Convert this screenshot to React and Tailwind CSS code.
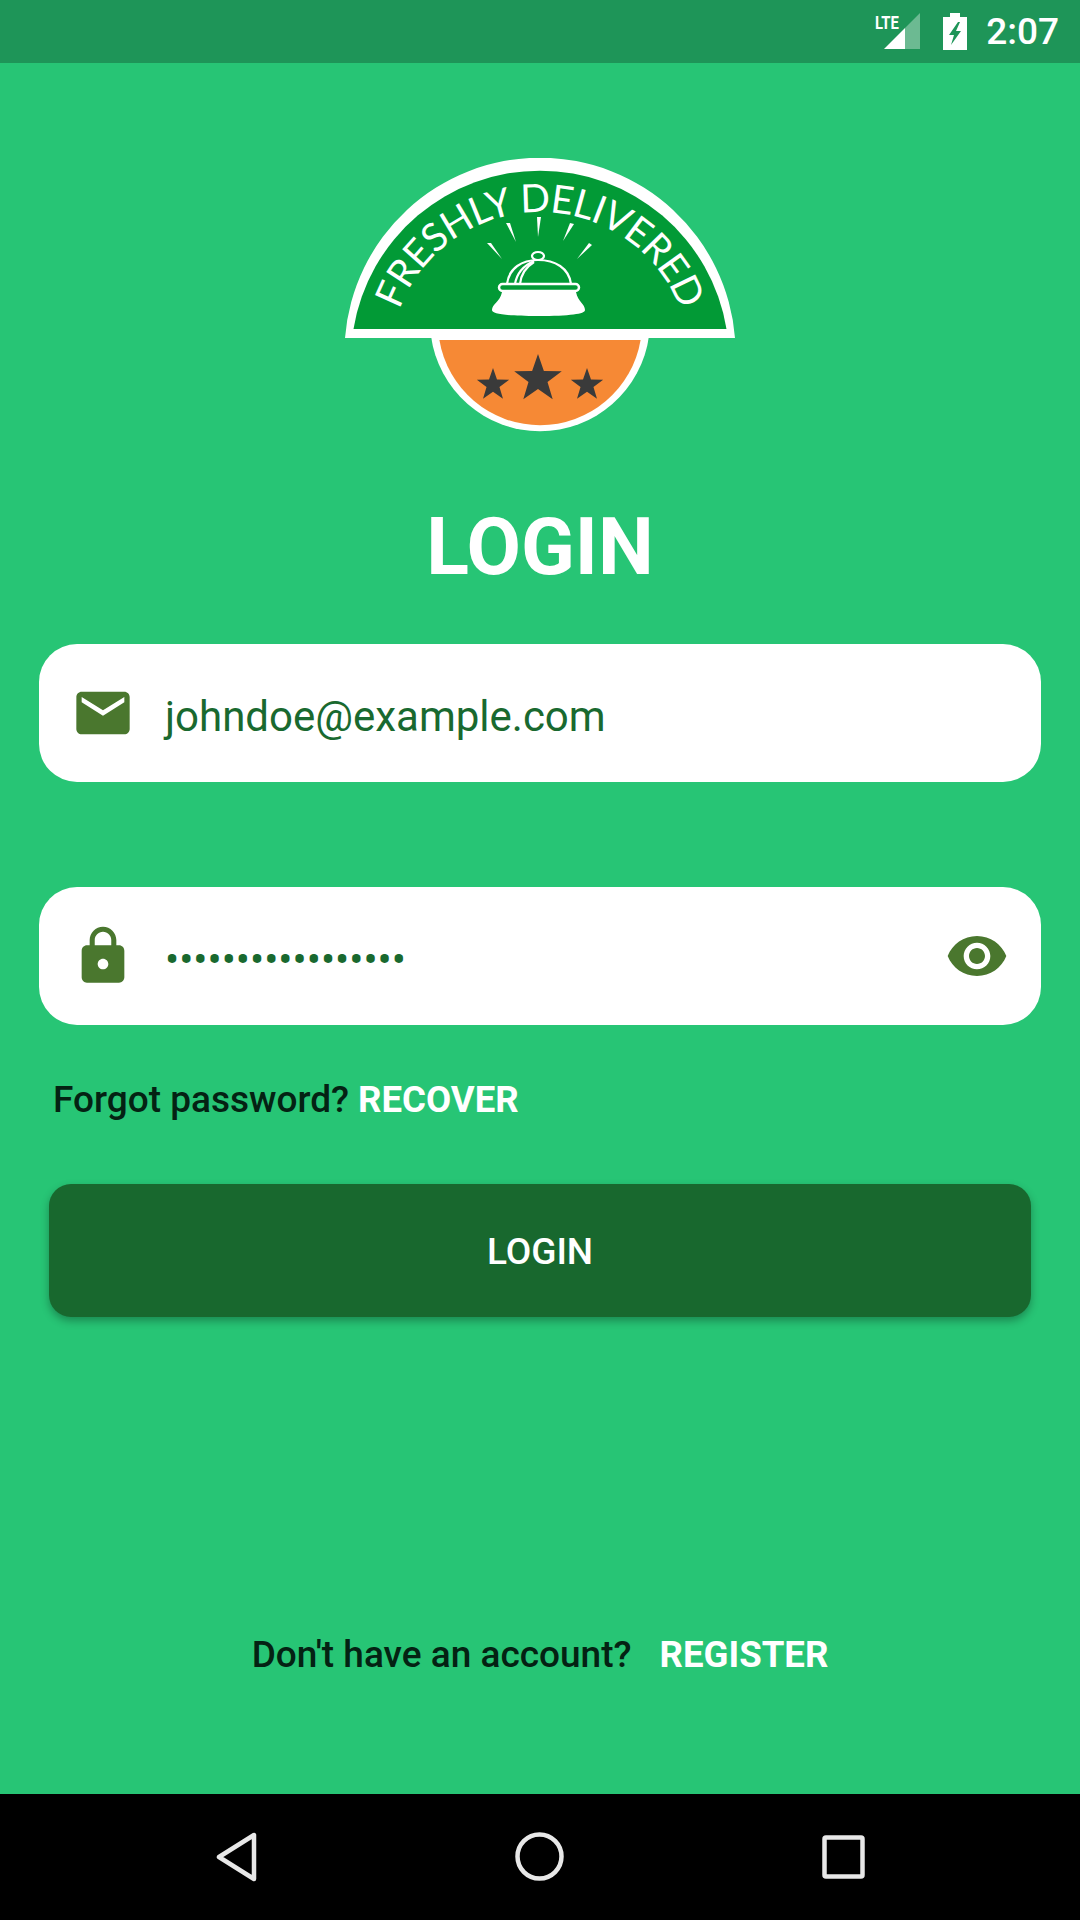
const ROBOTO = "font-['Roboto',sans-serif]";

const starPoints = (cx, cy, r) => {
  const pts = [];
  for (let i = 0; i < 10; i++) {
    const rad = i % 2 === 0 ? r : r * 0.4;
    const a = (Math.PI / 5) * i - Math.PI / 2;
    pts.push(`${cx + rad * Math.cos(a)},${cy + rad * Math.sin(a)}`);
  }
  return pts.join(' ');
};

function Logo() {
  return (
    <svg viewBox="345 158 390 275" className="w-[390px] h-[275px] block">
      <defs>
        <path id="logoArc" d="M 390 362 A 150 150 0 0 1 690 362" />
      </defs>
      {/* orange bottom */}
      <path d="M431 336 A 110 110 0 0 0 649 336 Z" fill="#ffffff" />
      <path d="M439.4 340 A 102 102 0 0 0 640.6 340 Z" fill="#f68935" />
      <polygon points={starPoints(538, 379, 25)} fill="#3a3a3a" />
      <polygon points={starPoints(493, 385, 17)} fill="#3a3a3a" />
      <polygon points={starPoints(587, 385, 17)} fill="#3a3a3a" />
      {/* green top */}
      <path d="M345 338 A 195.6 195.6 0 0 1 735 338 Z" fill="#ffffff" />
      <path d="M353.5 329 A 189 189 0 0 1 726.5 329 Z" fill="#029a36" />
      <text fill="#ffffff" fontSize="39" fontFamily="Lato, sans-serif" fontWeight="400" letterSpacing="-0.8">
        <textPath href="#logoArc" startOffset="50%" textAnchor="middle">FRESHLY DELIVERED</textPath>
      </text>
      {/* rays */}
      <g fill="#ffffff">
        <polygon points="502,259 487,243 491,243" />
        <polygon points="516,242 506,223 510,223" />
        <polygon points="538,237 537,217 541,217" />
        <polygon points="563,241 570,223 574,224" />
        <polygon points="577,259 589,243 592,245" />
      </g>
      {/* bell */}
      <g fill="none" stroke="#ffffff" strokeWidth="2.2">
        <ellipse cx="538" cy="256" rx="6" ry="4" />
        <path d="M507 284 C509 268 522 260 538 260 C555 260 569 268 571 284" />
        <path d="M515 284 C517 272 525 265 534 261" />
        <path d="M520 284 C521 274 526 267 534 262" />
        <rect x="499" y="284" width="80" height="7" rx="3.5" strokeWidth="2.5" />
      </g>
      <path d="M502 292 H576 C578 302 585 304 585 310 C585 314 570 316 538 316 C506 316 492 314 492 310 C492 304 500 302 502 292 Z" fill="#ffffff" />
    </svg>
  );
}

function StatusBar() {
  return (
    <div className="h-[63px] bg-[#1e9558] flex items-center justify-end shrink-0">
      <div className="relative w-[46px] h-[38px] mt-[-1px]">
        <span className={`absolute left-0 top-[1px] text-[19px] leading-[19px] font-bold text-white origin-left scale-x-[0.78] ${ROBOTO}`}>LTE</span>
        <svg viewBox="0 0 46 38" className="w-[46px] h-[38px]">
          <polygon points="9,37 30,16 30,37" fill="#ffffff" />
          <polygon points="30,16 45,1 45,37 30,37" fill="#ffffff" fillOpacity="0.35" />
        </svg>
      </div>
      <svg viewBox="0 0 24 37" className="w-[24px] h-[37px] ml-[22px]">
        <path d="M7 0H17V4H24V37H0V4H7Z" fill="#ffffff" />
        <path d="M15 9 L6 22 H11 L8 32 L18 18 H13 L17 9 Z" fill="#1e9558" />
      </svg>
      <span className={`ml-[19px] mr-[21px] text-[37px] leading-none font-medium text-white ${ROBOTO}`}>2:07</span>
    </div>
  );
}

function NavBar() {
  return (
    <div className="h-[126px] bg-black flex items-center justify-center gap-[258px] shrink-0">
      <svg viewBox="0 0 41 50" className="w-[41px] h-[50px] mt-[-1px]">
        <path d="M38 3 V47 L3 25 Z" fill="none" stroke="#e8e8e8" strokeWidth="4.5" strokeLinejoin="round" />
      </svg>
      <svg viewBox="0 0 49 49" className="w-[49px] h-[49px] mt-[-1px]">
        <circle cx="24.5" cy="24.5" r="22" fill="none" stroke="#e8e8e8" strokeWidth="4.5" />
      </svg>
      <svg viewBox="0 0 43 44" className="w-[43px] h-[44px] mt-[-1px]">
        <rect x="2.5" y="2.5" width="38" height="39" rx="1.5" fill="none" stroke="#e8e8e8" strokeWidth="4.5" />
      </svg>
    </div>
  );
}

function MaterialIcon({ d }) {
  return (
    <svg viewBox="0 0 24 24" className="w-[64px] h-[64px] shrink-0" fill="#4a772e">
      <path d={d} />
    </svg>
  );
}

const MAIL = 'M20 4H4c-1.1 0-1.99.9-1.99 2L2 18c0 1.1.9 2 2 2h16c1.1 0 2-.9 2-2V6c0-1.1-.9-2-2-2zm0 4l-8 5-8-5V6l8 5 8-5v2z';
const LOCK = 'M18 8h-1V6c0-2.76-2.24-5-5-5S7 3.24 7 6v2H6c-1.1 0-2 .9-2 2v10c0 1.1.9 2 2 2h12c1.1 0 2-.9 2-2V10c0-1.1-.9-2-2-2zm-6 9c-1.1 0-2-.9-2-2s.9-2 2-2 2 .9 2 2-.9 2-2 2zm3.1-9H8.9V6c0-1.71 1.39-3.1 3.1-3.1 1.71 0 3.1 1.39 3.1 3.1v2z';
const EYE = 'M12 4.5C7 4.5 2.73 7.61 1 12c1.73 4.39 6 7.5 11 7.5s9.27-3.11 11-7.5c-1.73-4.39-6-7.5-11-7.5zM12 17c-2.76 0-5-2.24-5-5s2.24-5 5-5 5 2.24 5 5-2.24 5-5 5zm0-8c-1.66 0-3 1.34-3 3s1.34 3 3 3 3-1.34 3-3-1.34-3-3-3z';

export default function App() {
  return (
    <div className={`w-[1080px] h-[1920px] flex flex-col bg-[#27c575] overflow-hidden ${ROBOTO}`}>
      <StatusBar />

      <div className="flex-1 flex flex-col">
        <div className="flex justify-center pt-[95px]">
          <Logo />
        </div>

        <h1 className="mt-[67px] text-center text-[79px] leading-[94px] font-bold text-white">LOGIN</h1>

        {/* Email */}
        <div className="mt-[50px] mx-[39px] h-[138px] bg-white rounded-[38px] flex items-center pl-[32px]">
          <MaterialIcon d={MAIL} />
          <span className="ml-[30px] text-[42px] leading-none text-[#19692f] mt-[8px]">johndoe@example.com</span>
        </div>

        {/* Password */}
        <div className="mt-[105px] mx-[39px] h-[138px] bg-white rounded-[38px] flex items-center pl-[32px] pr-[32px]">
          <MaterialIcon d={LOCK} />
          <span className="ml-[30px] flex-1 text-[42px] leading-none text-[#19692f] mt-[8px]">•••••••••••••••••</span>
          <MaterialIcon d={EYE} />
        </div>

        <div className="mt-[54px] ml-[53px] flex items-center text-[37px] leading-[42px] font-medium">
          <span className="text-[#042213]">Forgot password?</span>
          <span className="ml-[9px] text-[36.6px] font-bold text-white">RECOVER</span>
        </div>

        <button className="mt-[63px] mx-[49px] h-[133px] pt-[3px] rounded-[22px] bg-[#18682e] text-white text-[37px] font-medium shadow-[0_4px_8px_rgba(0,0,0,0.3)]">
          LOGIN
        </button>

        <div className="mt-[317px] flex justify-center items-center text-[37px] leading-[42px] font-medium">
          <span className="text-[#042213]">Don't have an account?</span>
          <span className="ml-[28px] text-[36.6px] font-bold text-white">REGISTER</span>
        </div>
      </div>

      <NavBar />
    </div>
  );
}
